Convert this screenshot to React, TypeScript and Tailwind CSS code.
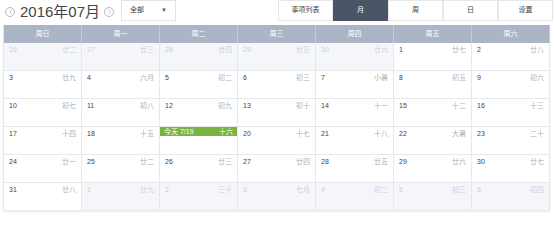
import { ChevronLeft, ChevronRight } from "lucide-react";

type Day = { d: number; lunar: string; other?: boolean; today?: boolean };

const weekNames = ["周日", "周一", "周二", "周三", "周四", "周五", "周六"];

const weeks: Day[][] = [
  [
    { d: 26, lunar: "廿二", other: true },
    { d: 27, lunar: "廿三", other: true },
    { d: 28, lunar: "廿四", other: true },
    { d: 29, lunar: "廿五", other: true },
    { d: 30, lunar: "廿六", other: true },
    { d: 1, lunar: "廿七" },
    { d: 2, lunar: "廿八" },
  ],
  [
    { d: 3, lunar: "廿九" },
    { d: 4, lunar: "六月" },
    { d: 5, lunar: "初二" },
    { d: 6, lunar: "初三" },
    { d: 7, lunar: "小暑" },
    { d: 8, lunar: "初五" },
    { d: 9, lunar: "初六" },
  ],
  [
    { d: 10, lunar: "初七" },
    { d: 11, lunar: "初八" },
    { d: 12, lunar: "初九" },
    { d: 13, lunar: "初十" },
    { d: 14, lunar: "十一" },
    { d: 15, lunar: "十二" },
    { d: 16, lunar: "十三" },
  ],
  [
    { d: 17, lunar: "十四" },
    { d: 18, lunar: "十五" },
    { d: 19, lunar: "十六", today: true },
    { d: 20, lunar: "十七" },
    { d: 21, lunar: "十八" },
    { d: 22, lunar: "大暑" },
    { d: 23, lunar: "二十" },
  ],
  [
    { d: 24, lunar: "廿一" },
    { d: 25, lunar: "廿二" },
    { d: 26, lunar: "廿三" },
    { d: 27, lunar: "廿四" },
    { d: 28, lunar: "廿五" },
    { d: 29, lunar: "廿六" },
    { d: 30, lunar: "廿七" },
  ],
  [
    { d: 31, lunar: "廿八" },
    { d: 1, lunar: "廿九", other: true },
    { d: 2, lunar: "三十", other: true },
    { d: 3, lunar: "七月", other: true },
    { d: 4, lunar: "初二", other: true },
    { d: 5, lunar: "初三", other: true },
    { d: 6, lunar: "初四", other: true },
  ],
];

const views = ["事项列表", "月", "周", "日", "设置"];

function Cell({ day }: { day: Day }) {
  if (day.today) {
    return (
      <div className="h-[28px] border-r border-b border-[#e6e8ec] bg-white">
        <div className="flex h-[9px] items-center justify-between bg-[#7ab342] px-[4px] text-[7px] leading-none text-white">
          <span>今天 7/19</span>
          <span>{day.lunar}</span>
        </div>
      </div>
    );
  }
  return (
    <div
      className={`flex h-[28px] justify-between border-r border-b border-[#e6e8ec] px-[5px] pt-[3px] text-[7px] leading-none ${
        day.other ? "bg-[#f5f6fa] text-[#cdd0d8]" : "bg-white"
      }`}
    >
      <span className={day.other ? "" : "text-[#444]"}>{day.d}</span>
      <span className={day.other ? "" : "text-[#b0b0b0]"}>{day.lunar}</span>
    </div>
  );
}

export default function App() {
  return (
    <div
      className="h-[245px] w-[554px] bg-white"
      style={{ fontFamily: '"Liberation Sans", "Noto Sans CJK SC", sans-serif' }}
    >
      <div className="flex h-[22px] items-start">
        <div className="flex items-center pl-[5px] pt-[3px]">
          <span className="flex h-[10px] w-[10px] items-center justify-center rounded-full border border-[#bbb] text-[#aaa]">
            <ChevronLeft size={7} strokeWidth={2.5} />
          </span>
          <span className="ml-[5px] text-[15px] leading-[17px] text-[#444]">2016年07月</span>
          <span className="ml-[4px] flex h-[10px] w-[10px] items-center justify-center rounded-full border border-[#bbb] text-[#aaa]">
            <ChevronRight size={7} strokeWidth={2.5} />
          </span>
        </div>
        <div className="ml-[7px] flex h-[21px] w-[55px] items-center justify-between border border-[#e4e4e4] px-[8px] text-[7px] text-[#333]">
          <span>全部</span>
          <span className="text-[6px] text-[#555]">▼</span>
        </div>
        <div className="ml-auto mr-[1px] flex h-[21px]">
          {views.map((v) => (
            <div
              key={v}
              className={`flex w-[55px] items-center justify-center border text-[7px] ${
                v === "月"
                  ? "border-[#4b5568] bg-[#4b5568] text-white"
                  : "border-[#e8e8e8] bg-white text-[#444]"
              }`}
            >
              {v}
            </div>
          ))}
        </div>
      </div>

      <div className="mx-[3px] mt-[3px] w-[547px] border-l border-[#e6e8ec] shadow-[0_1px_2px_rgba(0,0,0,0.08)]">
        <div className="grid h-[18px] grid-cols-7 bg-[#aab5c6]">
          {weekNames.map((w) => (
            <div
              key={w}
              className="flex items-center justify-center border-r border-[#c3cbd7] text-[7px] text-white"
            >
              {w}
            </div>
          ))}
        </div>
        {weeks.map((week, i) => (
          <div key={i} className="grid grid-cols-7">
            {week.map((day, j) => (
              <Cell key={j} day={day} />
            ))}
          </div>
        ))}
      </div>
    </div>
  );
}
